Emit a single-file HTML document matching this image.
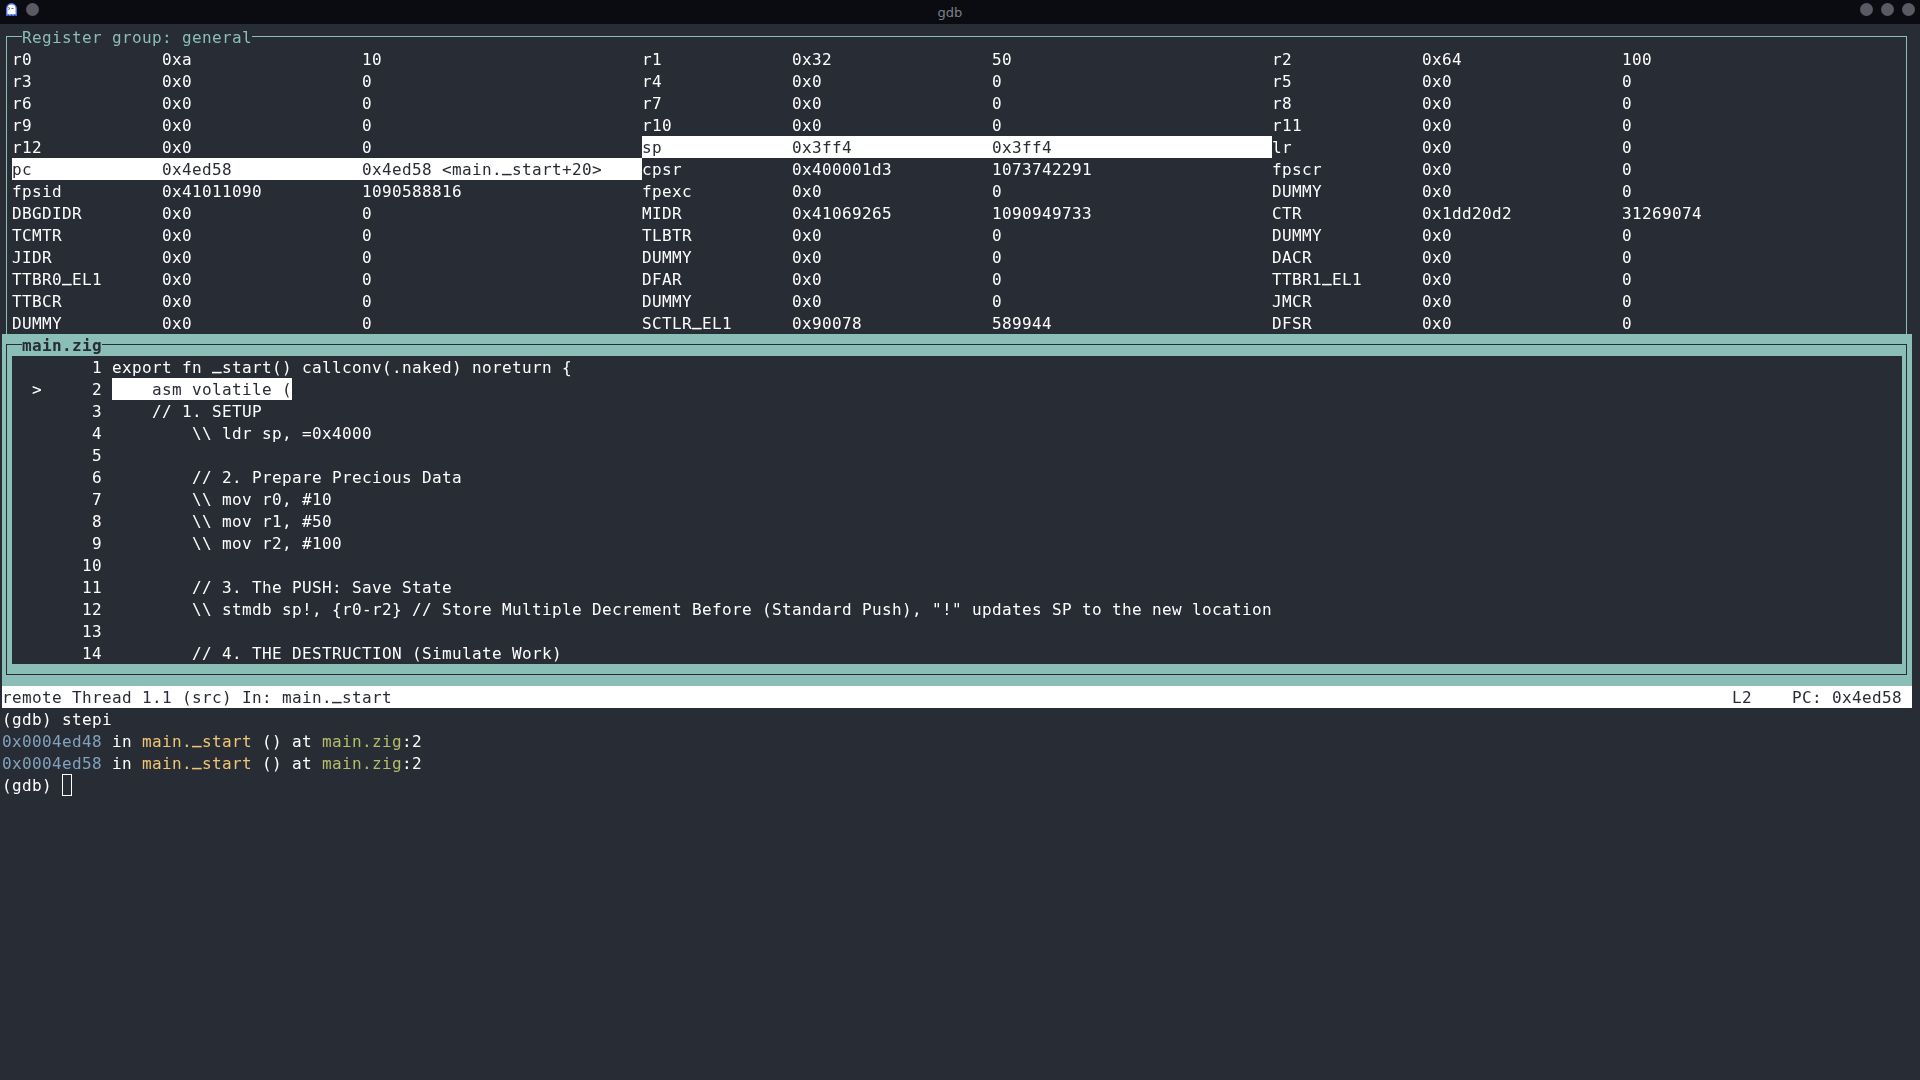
<!DOCTYPE html>
<html lang="en"><head><meta charset="utf-8"><title>gdb</title>
<style>
html,body{margin:0;padding:0;width:1920px;height:1080px;overflow:hidden;background:#282c34}
#t{position:absolute;left:0;top:0;width:1920px;height:1080px;font-family:"DejaVu Sans Mono", "Liberation Mono", monospace;font-size:16px;letter-spacing:0.3672px;color:#ffffff;will-change:transform}
#t span{position:absolute;height:22px;line-height:22px;white-space:pre}
#t i{position:absolute;display:block}
#t em{font-style:normal;font-weight:bold;position:relative;top:-3px}
.teal{color:#8abeb7} .dk{color:#282c34} .b{font-weight:bold}
.bl{color:#81a2be} .ye{color:#f0c674} .gr{color:#b5bd68}
#bar{position:absolute;left:0;top:0;width:1920px;height:24px;background:#0b0c12}
#bar .c{position:absolute;top:3px;width:13px;height:13px;border-radius:50%;background:#5a5a64}
#bar .ttl{position:absolute;left:-10px;width:1920px;top:1px;height:24px;line-height:24px;text-align:center;font-family:"DejaVu Sans","Liberation Sans",sans-serif;font-size:13px;color:#7f8088}
</style></head><body>
<div id="bar">
<div class="ttl">gdb</div>
<svg style="position:absolute;left:5px;top:2px" width="14" height="15" viewBox="0 0 14 15"><path d="M1.75 13.3V6.5a4.75 4.75 0 0 1 9.5 0v6.8l-1.6-.7-1.6.7-1.55-.7-1.55.7-1.6-.7z" fill="#fff" stroke="#4f78f4" stroke-width="1.35" stroke-linejoin="round"/><path d="M3.2 5.4l1.8 1.1-1.8 1.1M6.4 6.5h2.2" stroke="#555" stroke-width="0.8" fill="none"/></svg>
<div class="c" style="left:26px"></div>
<div class="c" style="left:1860px"></div><div class="c" style="left:1881px"></div><div class="c" style="left:1902px"></div>
</div>
<div id="t">
<i style="left:6px;top:36px;width:16px;height:1px;background:#8abeb7;"></i>
<i style="left:252px;top:36px;width:1655px;height:1px;background:#8abeb7;"></i>
<i style="left:6px;top:36px;width:1px;height:298px;background:#8abeb7;"></i>
<i style="left:1906px;top:36px;width:1px;height:298px;background:#8abeb7;"></i>
<span class="teal" style="left:22px;top:27px">Register group: general</span>
<span style="left:12px;top:49px">r0</span>
<span style="left:162px;top:49px">0xa</span>
<span style="left:362px;top:49px">10</span>
<span style="left:642px;top:49px">r1</span>
<span style="left:792px;top:49px">0x32</span>
<span style="left:992px;top:49px">50</span>
<span style="left:1272px;top:49px">r2</span>
<span style="left:1422px;top:49px">0x64</span>
<span style="left:1622px;top:49px">100</span>
<span style="left:12px;top:71px">r3</span>
<span style="left:162px;top:71px">0x0</span>
<span style="left:362px;top:71px">0</span>
<span style="left:642px;top:71px">r4</span>
<span style="left:792px;top:71px">0x0</span>
<span style="left:992px;top:71px">0</span>
<span style="left:1272px;top:71px">r5</span>
<span style="left:1422px;top:71px">0x0</span>
<span style="left:1622px;top:71px">0</span>
<span style="left:12px;top:93px">r6</span>
<span style="left:162px;top:93px">0x0</span>
<span style="left:362px;top:93px">0</span>
<span style="left:642px;top:93px">r7</span>
<span style="left:792px;top:93px">0x0</span>
<span style="left:992px;top:93px">0</span>
<span style="left:1272px;top:93px">r8</span>
<span style="left:1422px;top:93px">0x0</span>
<span style="left:1622px;top:93px">0</span>
<span style="left:12px;top:115px">r9</span>
<span style="left:162px;top:115px">0x0</span>
<span style="left:362px;top:115px">0</span>
<span style="left:642px;top:115px">r10</span>
<span style="left:792px;top:115px">0x0</span>
<span style="left:992px;top:115px">0</span>
<span style="left:1272px;top:115px">r11</span>
<span style="left:1422px;top:115px">0x0</span>
<span style="left:1622px;top:115px">0</span>
<span style="left:12px;top:137px">r12</span>
<span style="left:162px;top:137px">0x0</span>
<span style="left:362px;top:137px">0</span>
<i style="left:642px;top:136px;width:630px;height:22px;background:#ffffff;"></i>
<span class="dk" style="left:642px;top:137px">sp</span>
<span class="dk" style="left:792px;top:137px">0x3ff4</span>
<span class="dk" style="left:992px;top:137px">0x3ff4</span>
<span style="left:1272px;top:137px">lr</span>
<span style="left:1422px;top:137px">0x0</span>
<span style="left:1622px;top:137px">0</span>
<i style="left:12px;top:158px;width:630px;height:22px;background:#ffffff;"></i>
<span class="dk" style="left:12px;top:159px">pc</span>
<span class="dk" style="left:162px;top:159px">0x4ed58</span>
<span class="dk" style="left:362px;top:159px">0x4ed58 &lt;main.<em>_</em>start+20&gt;</span>
<span style="left:642px;top:159px">cpsr</span>
<span style="left:792px;top:159px">0x400001d3</span>
<span style="left:992px;top:159px">1073742291</span>
<span style="left:1272px;top:159px">fpscr</span>
<span style="left:1422px;top:159px">0x0</span>
<span style="left:1622px;top:159px">0</span>
<span style="left:12px;top:181px">fpsid</span>
<span style="left:162px;top:181px">0x41011090</span>
<span style="left:362px;top:181px">1090588816</span>
<span style="left:642px;top:181px">fpexc</span>
<span style="left:792px;top:181px">0x0</span>
<span style="left:992px;top:181px">0</span>
<span style="left:1272px;top:181px">DUMMY</span>
<span style="left:1422px;top:181px">0x0</span>
<span style="left:1622px;top:181px">0</span>
<span style="left:12px;top:203px">DBGDIDR</span>
<span style="left:162px;top:203px">0x0</span>
<span style="left:362px;top:203px">0</span>
<span style="left:642px;top:203px">MIDR</span>
<span style="left:792px;top:203px">0x41069265</span>
<span style="left:992px;top:203px">1090949733</span>
<span style="left:1272px;top:203px">CTR</span>
<span style="left:1422px;top:203px">0x1dd20d2</span>
<span style="left:1622px;top:203px">31269074</span>
<span style="left:12px;top:225px">TCMTR</span>
<span style="left:162px;top:225px">0x0</span>
<span style="left:362px;top:225px">0</span>
<span style="left:642px;top:225px">TLBTR</span>
<span style="left:792px;top:225px">0x0</span>
<span style="left:992px;top:225px">0</span>
<span style="left:1272px;top:225px">DUMMY</span>
<span style="left:1422px;top:225px">0x0</span>
<span style="left:1622px;top:225px">0</span>
<span style="left:12px;top:247px">JIDR</span>
<span style="left:162px;top:247px">0x0</span>
<span style="left:362px;top:247px">0</span>
<span style="left:642px;top:247px">DUMMY</span>
<span style="left:792px;top:247px">0x0</span>
<span style="left:992px;top:247px">0</span>
<span style="left:1272px;top:247px">DACR</span>
<span style="left:1422px;top:247px">0x0</span>
<span style="left:1622px;top:247px">0</span>
<span style="left:12px;top:269px">TTBR0<em>_</em>EL1</span>
<span style="left:162px;top:269px">0x0</span>
<span style="left:362px;top:269px">0</span>
<span style="left:642px;top:269px">DFAR</span>
<span style="left:792px;top:269px">0x0</span>
<span style="left:992px;top:269px">0</span>
<span style="left:1272px;top:269px">TTBR1<em>_</em>EL1</span>
<span style="left:1422px;top:269px">0x0</span>
<span style="left:1622px;top:269px">0</span>
<span style="left:12px;top:291px">TTBCR</span>
<span style="left:162px;top:291px">0x0</span>
<span style="left:362px;top:291px">0</span>
<span style="left:642px;top:291px">DUMMY</span>
<span style="left:792px;top:291px">0x0</span>
<span style="left:992px;top:291px">0</span>
<span style="left:1272px;top:291px">JMCR</span>
<span style="left:1422px;top:291px">0x0</span>
<span style="left:1622px;top:291px">0</span>
<span style="left:12px;top:313px">DUMMY</span>
<span style="left:162px;top:313px">0x0</span>
<span style="left:362px;top:313px">0</span>
<span style="left:642px;top:313px">SCTLR<em>_</em>EL1</span>
<span style="left:792px;top:313px">0x90078</span>
<span style="left:992px;top:313px">589944</span>
<span style="left:1272px;top:313px">DFSR</span>
<span style="left:1422px;top:313px">0x0</span>
<span style="left:1622px;top:313px">0</span>
<i style="left:2px;top:334px;width:1910px;height:352px;background:#8abeb7;"></i>
<i style="left:12px;top:356px;width:1890px;height:308px;background:#282c34;"></i>
<i style="left:6px;top:344px;width:16px;height:1px;background:#282c34;"></i>
<i style="left:102px;top:344px;width:1805px;height:1px;background:#282c34;"></i>
<i style="left:6px;top:344px;width:1px;height:331px;background:#282c34;"></i>
<i style="left:1906px;top:344px;width:1px;height:331px;background:#282c34;"></i>
<i style="left:6px;top:674px;width:1901px;height:1px;background:#282c34;"></i>
<span class="dk b" style="left:22px;top:335px">main.zig</span>
<span style="left:92px;top:357px">1</span>
<span style="left:112px;top:357px">export fn <em>_</em>start() callconv(.naked) noreturn {</span>
<span style="left:92px;top:379px">2</span>
<span style="left:32px;top:379px">&gt;</span>
<i style="left:112px;top:378px;width:180px;height:22px;background:#ffffff;"></i>
<span class="dk" style="left:152px;top:379px">asm volatile (</span>
<span style="left:92px;top:401px">3</span>
<span style="left:152px;top:401px">// 1. SETUP</span>
<span style="left:92px;top:423px">4</span>
<span style="left:192px;top:423px">\\ ldr sp, =0x4000</span>
<span style="left:92px;top:445px">5</span>
<span style="left:92px;top:467px">6</span>
<span style="left:192px;top:467px">// 2. Prepare Precious Data</span>
<span style="left:92px;top:489px">7</span>
<span style="left:192px;top:489px">\\ mov r0, #10</span>
<span style="left:92px;top:511px">8</span>
<span style="left:192px;top:511px">\\ mov r1, #50</span>
<span style="left:92px;top:533px">9</span>
<span style="left:192px;top:533px">\\ mov r2, #100</span>
<span style="left:82px;top:555px">10</span>
<span style="left:82px;top:577px">11</span>
<span style="left:192px;top:577px">// 3. The PUSH: Save State</span>
<span style="left:82px;top:599px">12</span>
<span style="left:192px;top:599px">\\ stmdb sp!, {r0-r2} // Store Multiple Decrement Before (Standard Push), "!" updates SP to the new location</span>
<span style="left:82px;top:621px">13</span>
<span style="left:82px;top:643px">14</span>
<span style="left:192px;top:643px">// 4. THE DESTRUCTION (Simulate Work)</span>
<i style="left:2px;top:686px;width:1910px;height:22px;background:#ffffff;"></i>
<span class="dk" style="left:2px;top:687px">remote Thread 1.1 (src) In: main.<em>_</em>start</span>
<span class="dk" style="left:1732px;top:687px">L2</span>
<span class="dk" style="left:1792px;top:687px">PC: 0x4ed58</span>
<span style="left:2px;top:709px">(gdb) stepi</span>
<span class="bl" style="left:2px;top:731px">0x0004ed48</span>
<span style="left:112px;top:731px">in</span>
<span class="ye" style="left:142px;top:731px">main.<em>_</em>start</span>
<span style="left:262px;top:731px">() at</span>
<span class="gr" style="left:322px;top:731px">main.zig</span>
<span style="left:402px;top:731px">:2</span>
<span class="bl" style="left:2px;top:753px">0x0004ed58</span>
<span style="left:112px;top:753px">in</span>
<span class="ye" style="left:142px;top:753px">main.<em>_</em>start</span>
<span style="left:262px;top:753px">() at</span>
<span class="gr" style="left:322px;top:753px">main.zig</span>
<span style="left:402px;top:753px">:2</span>
<span style="left:2px;top:775px">(gdb)</span>
<i style="left:62px;top:774px;width:10px;height:22px;box-sizing:border-box;border:1px solid #ffffff"></i>
</div>
</body></html>
